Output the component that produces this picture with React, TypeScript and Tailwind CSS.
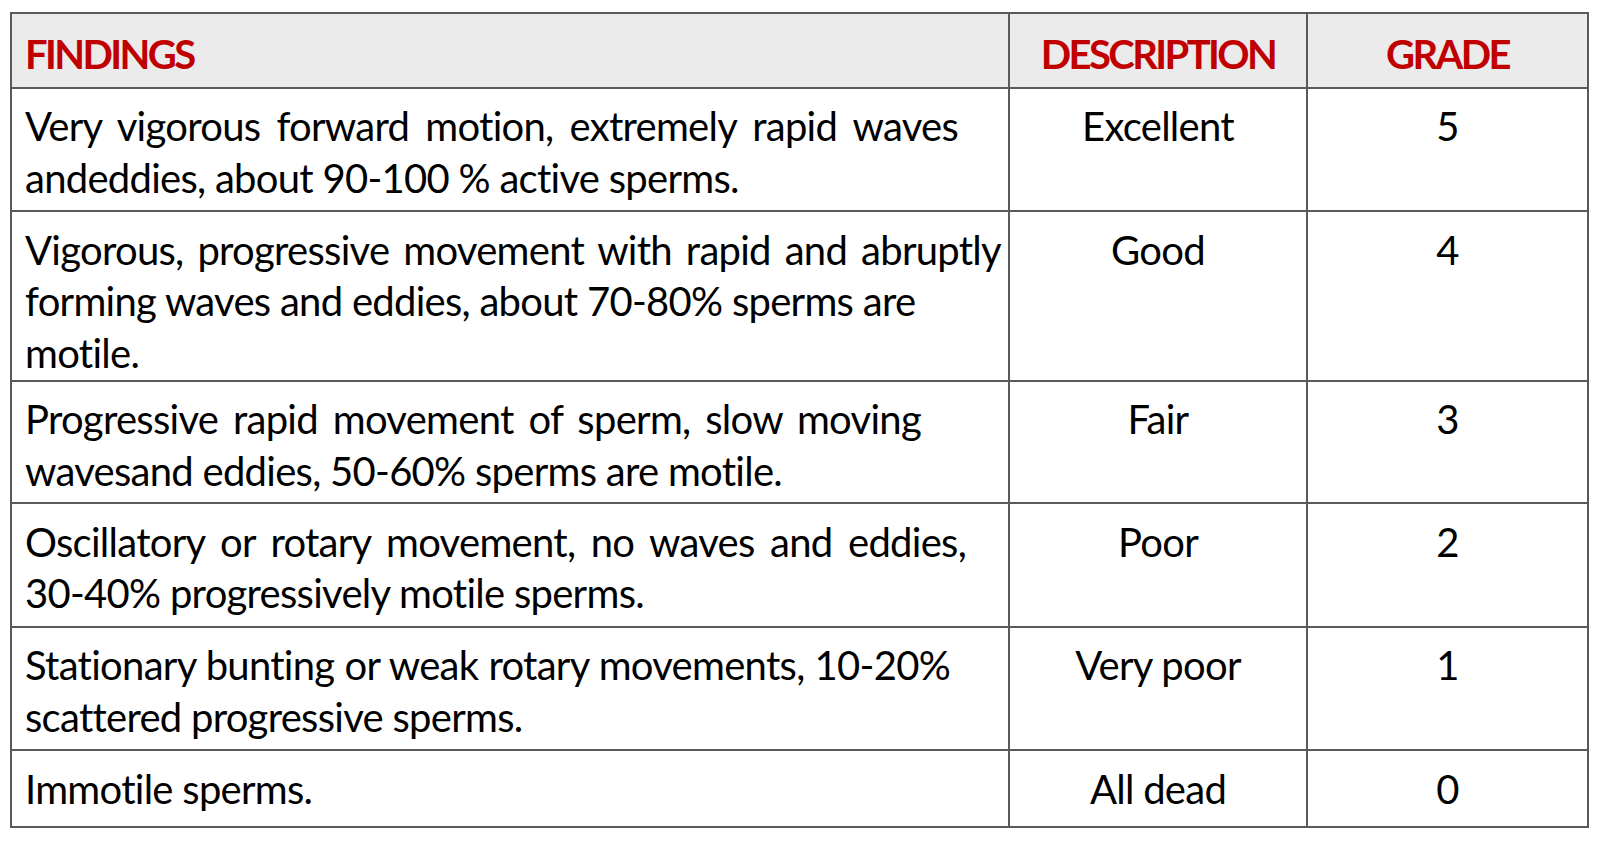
type Row = {
  lines: string[];
  width: string;
  height: string;
  description: string;
  grade: string;
};

// each finding is laid out line by line; all but the last line are justified
const rows: Row[] = [
  {
    lines: [
      "Very vigorous forward motion, extremely rapid waves",
      "andeddies, about 90-100 % active sperms.",
    ],
    width: "w-[933px]",
    height: "h-[123.5px]",
    description: "Excellent",
    grade: "5",
  },
  {
    lines: [
      "Vigorous, progressive  movement with rapid and abruptly",
      "forming waves and eddies, about 70-80% sperms are",
      "motile.",
    ],
    width: "w-[976px]",
    height: "h-[169.5px]",
    description: "Good",
    grade: "4",
  },
  {
    lines: [
      "Progressive rapid movement of sperm, slow moving",
      "wavesand eddies, 50-60% sperms are motile.",
    ],
    width: "w-[896px]",
    height: "h-[122.5px]",
    description: "Fair",
    grade: "3",
  },
  {
    lines: [
      "Oscillatory or rotary movement, no waves and eddies,",
      "30-40% progressively motile sperms.",
    ],
    width: "w-[941px]",
    height: "h-[123.5px]",
    description: "Poor",
    grade: "2",
  },
  {
    lines: [
      "Stationary bunting or weak rotary movements, 10-20%",
      "scattered progressive sperms.",
    ],
    width: "w-[925px]",
    height: "h-[123.5px]",
    description: "Very poor",
    grade: "1",
  },
  {
    lines: ["Immotile sperms."],
    width: "w-[925px]",
    height: "h-[76.5px]",
    description: "All dead",
    grade: "0",
  },
];

const headCell =
  "border-2 border-[#5a5a5a] pt-[16.5px] pb-[9.5px] text-[40px] leading-[46.5px] font-bold tracking-[-0.065em] text-[#c00000]";
const bodyCell = "border-2 border-[#5a5a5a] pt-[12.5px] pb-0 align-top";

export default function App() {
  return (
    <div className="min-h-screen bg-white pl-[10px] pt-[12px] font-['Lato','Liberation_Sans',sans-serif]">
      <table className="w-[1577px] table-fixed border-collapse border-2 border-[#3c3c3c] text-[40px] leading-[51.5px] tracking-[-0.018em] text-black">
        <colgroup>
          <col className="w-[998px]" />
          <col className="w-[298px]" />
          <col className="w-[281px]" />
        </colgroup>
        <thead>
          <tr className="bg-[#ebebeb]">
            <th className={`${headCell} pl-[13px] text-left`}>FINDINGS</th>
            <th className={`${headCell} text-center`}>DESCRIPTION</th>
            <th className={`${headCell} text-center`}>GRADE</th>
          </tr>
        </thead>
        <tbody>
          {rows.map((r) => (
            <tr key={r.grade} className={r.height}>
              <td className={`${bodyCell} pl-[13px] pr-[2px]`}>
                <div className={r.width}>
                  {r.lines.map((line, i) => (
                    <p
                      key={i}
                      className={
                        i < r.lines.length - 1 && !(r.grade === "4" && i === 1)
                          ? "text-justify [text-align-last:justify]"
                          : "text-left"
                      }
                    >
                      {line}
                    </p>
                  ))}
                </div>
              </td>
              <td className={`${bodyCell} text-center`}>{r.description}</td>
              <td className={`${bodyCell} text-center`}>{r.grade}</td>
            </tr>
          ))}
        </tbody>
      </table>
    </div>
  );
}
